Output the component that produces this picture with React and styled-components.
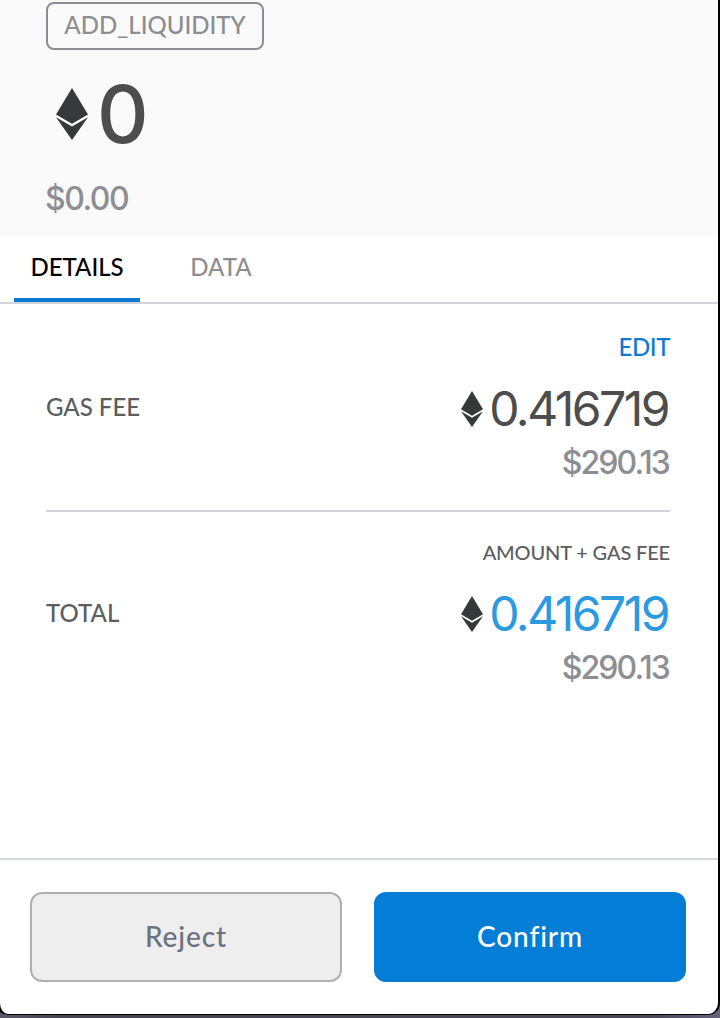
import React, {useState} from 'react';
import styled, {createGlobalStyle} from 'styled-components'

const GlobalStyle = createGlobalStyle`
    *{
        box-sizing: border-box;
    }
    body{
        margin: 0;
        background: linear-gradient(90deg, #5b586b, #474552 8%, #4a4856 90%, #66627c);
        font-family: Lato, sans-serif;
    }
`;

const Backdrop = styled.div`
    height: 1018px;
    overflow: hidden;
`;

const Popup = styled.div`
    display: flex;
    flex-direction: column;
    width: 724px;
    height: 1015px;
    margin-left: -4px;
    background: #fff;
    border: solid #000;
    border-width: 0 2px 1px 4px;
    border-radius: 0 0 12px 12px;
    overflow: hidden;
`;

const Hero = styled.header`
    height: 236px;
    padding: 2px 46px 0;
    background: #fafafa;
`;

const Action = styled.div`
    width: 218px;
    height: 48px;
    border: 2px solid #8b8d92;
    border-radius: 8px;
    color: #8b8d92;
    font-size: 24px;
    font-weight: 500;
    line-height: 42px;
    text-align: center;
    white-space: nowrap;
`;

const HeroAmount = styled.div`
    display: flex;
    align-items: center;
    gap: 9px;
    height: 94px;
    margin-top: 17px;
    padding-left: 10px;
    color: #4d4d4d;
    font-family: Inter, sans-serif;
    font-size: 80px;
    font-weight: 500;
    line-height: 92px;
`;

const HeroFiat = styled.div`
    margin-left: -1px;
    color: #8c8e94;
    font-family: Inter, sans-serif;
    font-size: 32px;
    font-weight: 500;
    line-height: 76px;
    letter-spacing: -1.5px;
`;

const Tabs = styled.nav`
    display: flex;
    gap: 34px;
    height: 68px;
    padding-left: 14px;
    border-bottom: 2px solid #d2d5da;
`;

const Tab = styled.button`
    width: ${props => props.$width}px;
    height: 66px;
    padding: 0;
    background: none;
    border: 0;
    border-bottom: 4px solid ${props => props.$active ? '#0c7ad0' : 'transparent'};
    color: ${props => props.$active ? '#000' : '#8c8e94'};
    font-family: inherit;
    font-size: 24px;
    font-weight: 500;
    line-height: 62px;
    white-space: nowrap;
`;

const Content = styled.main`
    flex: 1;
    padding: 0 48px 0 46px;
`;

const Row = styled.section`
    display: flex;
    align-items: center;
    justify-content: space-between;
    padding: ${props => props.$top}px 0 21px;
    border-bottom: 2px solid ${props => props.$divided ? '#d2d5da' : 'transparent'};
`;

const Label = styled.div`
    padding-bottom: ${props => props.$lift}px;
    color: #5b5d5f;
    font-size: 24px;
    font-weight: 500;
    line-height: 30px;
`;

const Values = styled.div`
    display: flex;
    flex-direction: column;
    align-items: flex-end;
`;

const Edit = styled.a`
    color: #0c7ad0;
    font-size: 24px;
    font-weight: 500;
    line-height: 30px;
    letter-spacing: -0.4px;
    cursor: pointer;
`;

const Note = styled.div`
    color: #5b5d5f;
    font-size: 20px;
    font-weight: 500;
    line-height: 30px;
    letter-spacing: -0.15px;
`;

const Amount = styled.div`
    display: flex;
    align-items: center;
    gap: 6px;
    height: 57px;
    margin-top: 18px;
    padding-right: 2px;
    color: ${props => props.$highlight ? '#2b9ae0' : '#4d4d4d'};
    font-family: Inter, sans-serif;
    font-size: 48px;
    letter-spacing: -2.5px;

    svg{
        margin-top: 1px;
    }
`;

const Fiat = styled.div`
    padding-right: 1px;
    color: #8c8e94;
    font-family: Inter, sans-serif;
    font-size: 32px;
    font-weight: 500;
    line-height: 52px;
    letter-spacing: -1.9px;
`;

const Footer = styled.footer`
    display: flex;
    gap: 32px;
    padding: 32px 32px 32px 30px;
    border-top: 2px solid #d6d9da;
`;

const Button = styled.button`
    flex: 1;
    height: 90px;
    padding: 0 0 3px;
    background: ${props => props.$primary ? '#037dd6' : '#eee'};
    border: 2px solid ${props => props.$primary ? '#037dd6' : '#b0b0b0'};
    border-radius: 12px;
    color: ${props => props.$primary ? '#fff' : '#6a737d'};
    font-family: inherit;
    font-size: 28px;
    font-weight: 500;
    letter-spacing: 0.9px;
`;

const EthIcon = ({width, height}) => (
    <svg width={width} height={height} viewBox="0 0 32 52" preserveAspectRatio="none">
        <path d="M16 0 32 26.5 16 35.7 0 26.5Z" fill="#37383a" />
        <path d="M0 29.3 16 38.6 32 29.3 16 52Z" fill="#37383a" />
    </svg>
)

const App = () => {
    const [tab, setTab] = useState('details')

    return (
        <Backdrop>
            <GlobalStyle />
            <Popup>
                <Hero>
                    <Action>ADD_LIQUIDITY</Action>
                    <HeroAmount>
                        <EthIcon width={32} height={52} />
                        <span>0</span>
                    </HeroAmount>
                    <HeroFiat>$0.00</HeroFiat>
                </Hero>
                <Tabs>
                    <Tab $width={126} $active={tab === 'details'} onClick={() => setTab('details')}>DETAILS</Tab>
                    <Tab $width={94} $active={tab === 'data'} onClick={() => setTab('data')}>DATA</Tab>
                </Tabs>
                <Content>
                    <Row $top={28} $divided>
                        <Label $lift={7}>GAS FEE</Label>
                        <Values>
                            <Edit>EDIT</Edit>
                            <Amount>
                                <EthIcon width={22} height={36} />
                                <span>0.416719</span>
                            </Amount>
                            <Fiat>$290.13</Fiat>
                        </Values>
                    </Row>
                    <Row $top={25}>
                        <Label $lift={5}>TOTAL</Label>
                        <Values>
                            <Note>AMOUNT + GAS FEE</Note>
                            <Amount $highlight>
                                <EthIcon width={22} height={36} />
                                <span>0.416719</span>
                            </Amount>
                            <Fiat>$290.13</Fiat>
                        </Values>
                    </Row>
                </Content>
                <Footer>
                    <Button>Reject</Button>
                    <Button $primary>Confirm</Button>
                </Footer>
            </Popup>
        </Backdrop>
    );
}

export default App;
